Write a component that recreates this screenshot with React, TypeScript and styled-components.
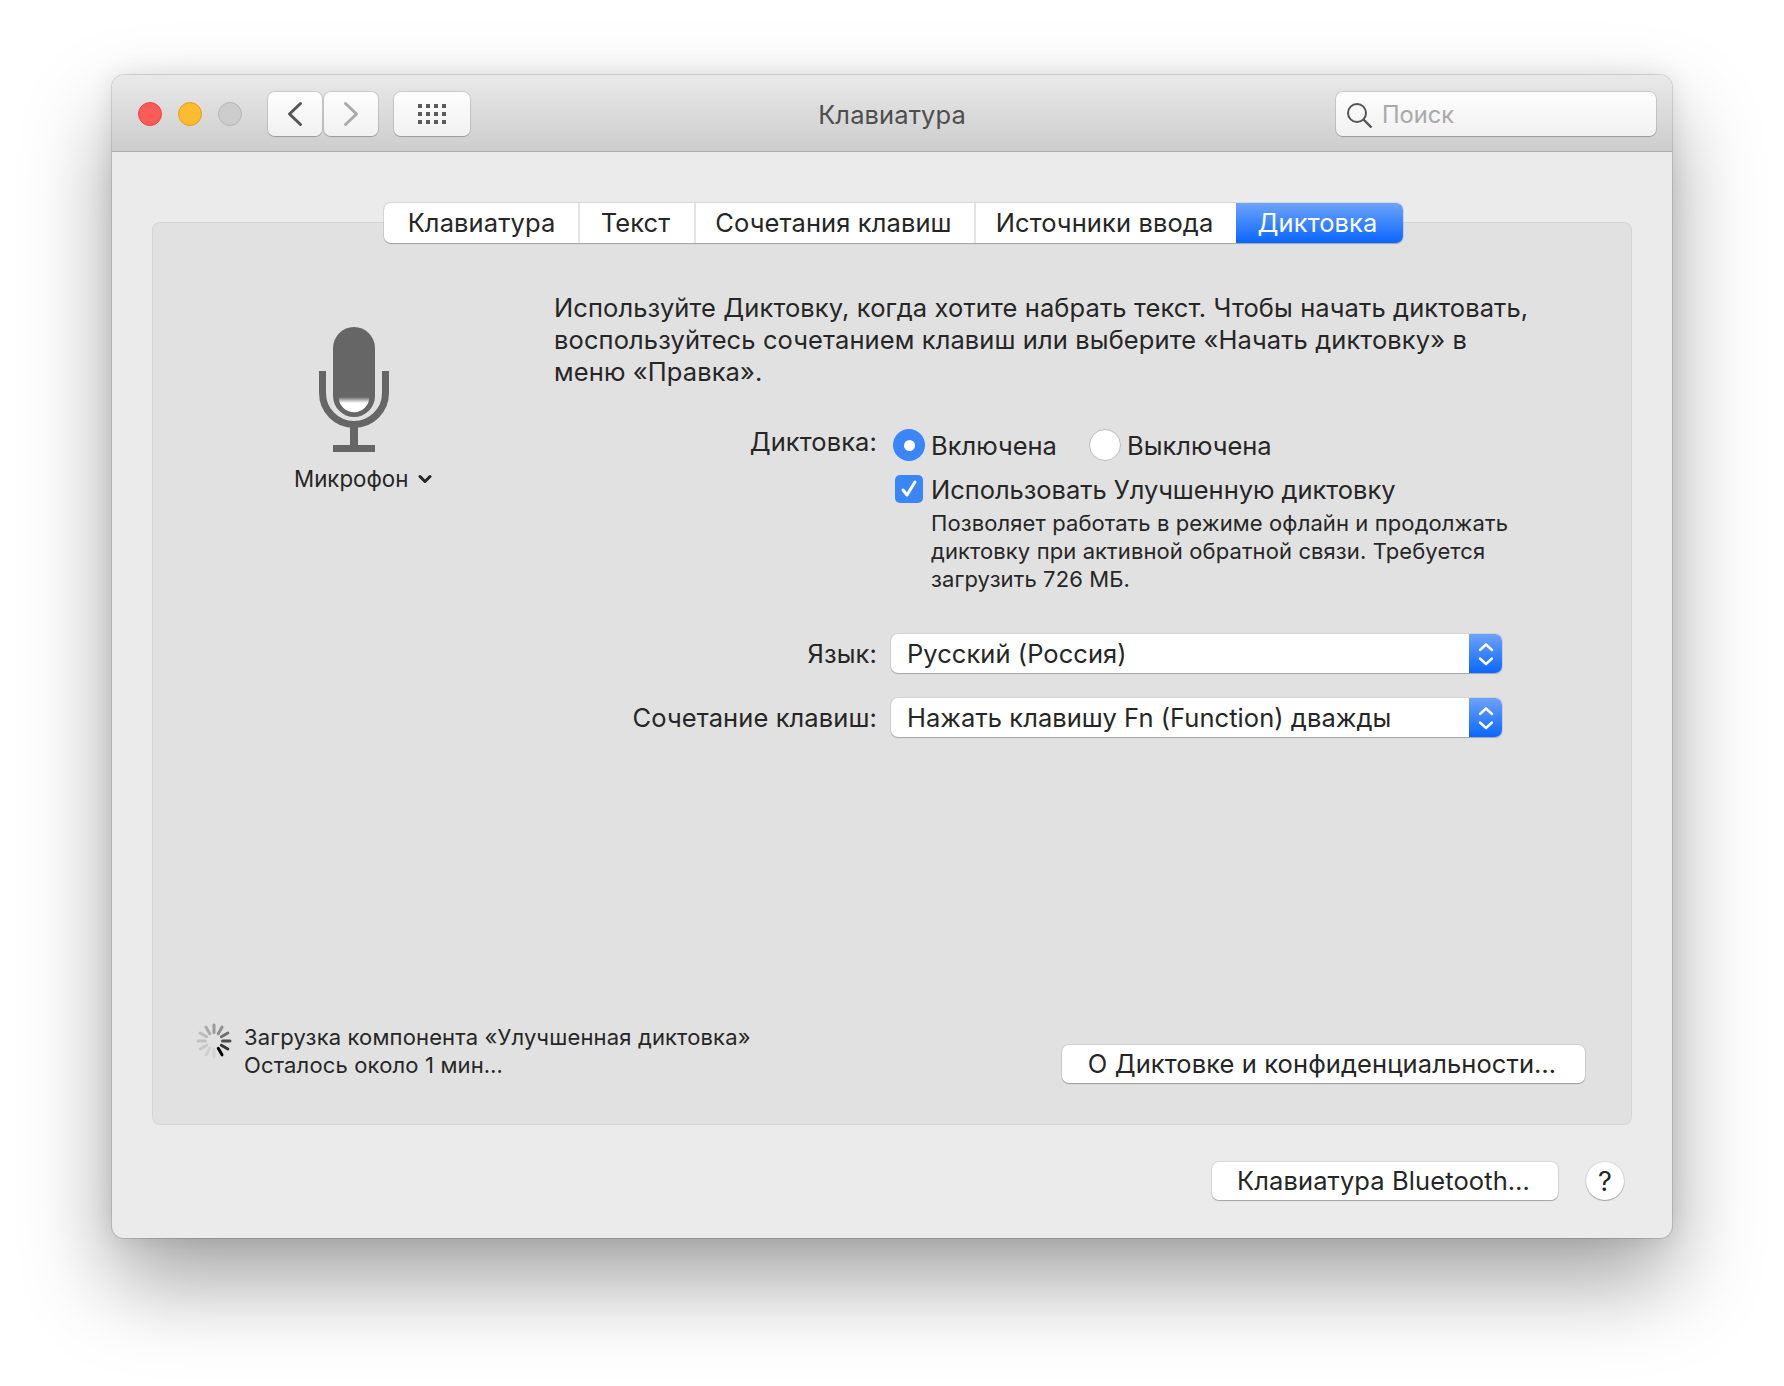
import React from "react";
import styled, { createGlobalStyle } from "styled-components";

const Global = createGlobalStyle`
  html, body { margin: 0; padding: 0; background: #fff; }
  body { font-family: Inter, "Noto Sans", "Liberation Sans", sans-serif; color: #262626; overflow: hidden; }
  #root { height: 1386px; }
`;

const Page = styled.div`
  padding: 75px 0 0 112px;
`;
const Win = styled.div`
  width: 1560px;
  border-radius: 12px;
  background: #ebebeb;
  box-shadow: 0 44px 88px rgba(0, 0, 0, 0.36), 0 0 24px rgba(0, 0, 0, 0.1), 0 0 0 1px rgba(0, 0, 0, 0.12);
`;
const TitleBar = styled.header`
  height: 77px;
  box-sizing: border-box;
  padding: 17px 16px 0 26px;
  display: flex;
  align-items: flex-start;
  position: relative;
  border-radius: 12px 12px 0 0;
  background: linear-gradient(#e9e9e9, #cdcdcd);
  border-bottom: 1px solid #aeaeae;
`;
const Lights = styled.div`
  display: flex;
  gap: 16px;
  padding-top: 10px;
  margin-right: 26px;
`;
const Light = styled.span<{ $c: string; $b: string }>`
  width: 24px;
  height: 24px;
  box-sizing: border-box;
  border-radius: 50%;
  background: ${(p) => p.$c};
  border: 1px solid ${(p) => p.$b};
`;
const ToolBtn = styled.button<{ $w: number; $ml?: number }>`
  width: ${(p) => p.$w}px;
  height: 44px;
  margin-left: ${(p) => p.$ml ?? 0}px;
  padding: 0;
  display: flex;
  align-items: center;
  justify-content: center;
  border: none;
  border-radius: 7px;
  background: linear-gradient(#fdfdfd, #f1f1f1);
  box-shadow: 0 0 0 1px rgba(0, 0, 0, 0.1), 0 1px 1px rgba(0, 0, 0, 0.18);
`;
const Title = styled.div`
  position: absolute;
  left: 0;
  right: 0;
  top: 24px;
  text-align: center;
  font-size: 25.5px;
  letter-spacing: 0.1px;
  line-height: 32px;
  color: #4e4e4e;
  pointer-events: none;
`;
const Search = styled.div`
  margin-left: auto;
  width: 320px;
  height: 44px;
  box-sizing: border-box;
  padding-left: 10px;
  display: flex;
  align-items: center;
  gap: 8px;
  border-radius: 7px;
  background: linear-gradient(#fdfdfd, #f1f1f1);
  box-shadow: 0 0 0 1px rgba(0, 0, 0, 0.1), 0 1px 1px rgba(0, 0, 0, 0.18);
  font-size: 23.7px;
  color: #a9a9a9;
`;
const Body = styled.div`
  padding: 51px 40px 38px;
`;
const Tabs = styled.nav`
  position: relative;
  z-index: 1;
  display: flex;
  width: fit-content;
  margin: 0 auto -21px;
  transform: translateX(1px);
  border-radius: 7px;
  background: #fff;
  box-shadow: 0 0 0 1px rgba(0, 0, 0, 0.08), 0 1px 1px rgba(0, 0, 0, 0.22);
`;
const Tab = styled.div<{ $w: number; $active?: boolean; $first?: boolean }>`
  width: ${(p) => p.$w}px;
  height: 40px;
  box-sizing: border-box;
  display: flex;
  align-items: center;
  justify-content: center;
  padding: 0 ${(p) => (p.$first ? 0 : p.$active ? 3 : 2)}px 2px ${(p) => (p.$first ? 2 : 0)}px;
  font-size: 25.5px;
  letter-spacing: 0.1px;
  white-space: nowrap;
  color: ${(p) => (p.$active ? "#fff" : "#262626")};
  background: ${(p) => (p.$active ? "linear-gradient(#6da3fb, #0a66ff)" : "transparent")};
  border-radius: ${(p) => (p.$active ? "0 7px 7px 0" : "0")};
  border-left: ${(p) => (p.$first || p.$active ? "none" : "2px solid #e4e4e4")};
`;
const Panel = styled.section`
  height: 903px;
  box-sizing: border-box;
  display: flex;
  flex-direction: column;
  justify-content: space-between;
  padding: 0 47px 42px 0;
  border-radius: 8px;
  background: #e1e1e1;
  box-shadow: inset 0 0 0 1px rgba(0, 0, 0, 0.05);
`;
const Top = styled.div`
  display: grid;
  grid-template-columns: 402px 1fr;
`;
const MicCol = styled.div`
  padding: 105px 0 0 142px;
  display: flex;
  flex-direction: column;
  align-items: flex-start;
`;
const MicArt = styled.svg`
  display: block;
  margin-left: 25px;
`;
const MicLabel = styled.div`
  margin-top: 13px;
  display: flex;
  align-items: center;
  gap: 10px;
  font-size: 22.3px;
  line-height: 28px;
  white-space: nowrap;
`;
const Right = styled.div`
  padding-top: 70px;
`;
const Desc = styled.p`
  margin: 0;
  font-size: 25.5px;
  letter-spacing: 0.1px;
  line-height: 32px;
  white-space: nowrap;
`;
const Form = styled.div`
  margin-top: 41px;
  display: grid;
  grid-template-columns: 323px 611px;
  column-gap: 14px;
`;
const Label = styled.div<{ $shift?: number }>`
  text-align: right;
  font-size: 25.5px;
  letter-spacing: 0.1px;
  line-height: 32px;
  white-space: nowrap;
  transform: translateY(${(p) => p.$shift ?? 0}px);
`;
const Radios = styled.div`
  display: grid;
  grid-template-columns: 196px auto;
  padding-left: 2px;
`;
const RadioOpt = styled.div`
  display: flex;
  align-items: center;
  gap: 6px;
  font-size: 25.5px;
  line-height: 32px;
  white-space: nowrap;
`;
const RowText = styled.span<{ $dy: number }>`
  transform: translateY(${(p) => p.$dy}px);
`;
const Radio = styled.span<{ $on?: boolean }>`
  width: 32px;
  height: 32px;
  box-sizing: border-box;
  flex: none;
  border-radius: 50%;
  display: flex;
  align-items: center;
  justify-content: center;
  background: ${(p) => (p.$on ? "#3b86f7" : "#fff")};
  border: ${(p) => (p.$on ? "none" : "1px solid #bdbdbd")};
  &::after {
    content: "";
    display: ${(p) => (p.$on ? "block" : "none")};
    width: 11px;
    height: 11px;
    border-radius: 50%;
    background: #fff;
  }
`;
const Side = styled.div`
  grid-column: 2;
`;
const CheckRow = styled.div`
  margin: 14px 0 0 4px;
  display: flex;
  align-items: center;
  gap: 8px;
  font-size: 25.5px;
  letter-spacing: -0.04px;
  line-height: 28px;
  white-space: nowrap;
`;
const Check = styled.span`
  width: 28px;
  height: 28px;
  flex: none;
  border-radius: 5px;
  background: #3b86f7;
  display: flex;
  align-items: center;
  justify-content: center;
`;
const Hint = styled.p`
  margin: 6px 0 0 40px;
  font-size: 22px;
  letter-spacing: 0.1px;
  line-height: 28px;
  white-space: nowrap;
`;
const SelectLabel = styled(Label)<{ $mt: number }>`
  margin-top: ${(p) => p.$mt}px;
  line-height: 39px;
`;
const Select = styled.div<{ $mt: number }>`
  margin-top: ${(p) => p.$mt}px;
  height: 39px;
  display: flex;
  align-items: center;
  justify-content: space-between;
  border-radius: 7px;
  background: #fff;
  box-shadow: 0 0 0 1px rgba(0, 0, 0, 0.06), 0 1px 1px rgba(0, 0, 0, 0.22);
  font-size: 25.5px;
  letter-spacing: 0.05px;
  white-space: nowrap;
`;
const SelectText = styled.span`
  padding-left: 16px;
`;
const Stepper = styled.span`
  width: 33px;
  height: 100%;
  display: flex;
  align-items: center;
  justify-content: center;
  border-radius: 0 7px 7px 0;
  background: linear-gradient(#6da3fb, #0a66ff);
`;
const Bottom = styled.div`
  display: flex;
  justify-content: space-between;
  align-items: flex-end;
`;
const Status = styled.div`
  margin: 0 0 4px 44px;
  display: flex;
  gap: 12px;
  font-size: 22px;
  letter-spacing: 0.15px;
  line-height: 28px;
  white-space: nowrap;
`;
const Spin = styled.svg`
  display: block;
  flex: none;
`;
const PushBtn = styled.button<{ $w: number }>`
  width: ${(p) => p.$w}px;
  height: 38px;
  padding: 0 3px 2px 0;
  border: none;
  border-radius: 7px;
  background: #fff;
  box-shadow: 0 0 0 1px rgba(0, 0, 0, 0.07), 0 1px 1px rgba(0, 0, 0, 0.25);
  font: inherit;
  font-size: 25.5px;
  letter-spacing: 0.1px;
  color: #262626;
  white-space: nowrap;
`;
const Footer = styled.div`
  display: flex;
  justify-content: flex-end;
  align-items: center;
  gap: 28px;
  padding: 37px 8px 0 0;
`;
const Help = styled.button`
  width: 38px;
  height: 38px;
  padding: 0;
  border: none;
  border-radius: 50%;
  background: #fff;
  box-shadow: 0 0 0 1px rgba(0, 0, 0, 0.07), 0 1px 1px rgba(0, 0, 0, 0.25);
  font: inherit;
  font-size: 27px;
  color: #262626;
`;

const Chevron = ({ dir, color }: { dir: "l" | "r"; color: string }) => (
  <svg width="16" height="26" viewBox="0 0 16 26" fill="none">
    <path
      d={dir === "l" ? "M13.5 2.5 2.5 13l11 10.5" : "M2.5 2.5 13.5 13l-11 10.5"}
      stroke={color}
      strokeWidth="3"
      strokeLinecap="round"
      strokeLinejoin="round"
    />
  </svg>
);

const GridIcon = () => (
  <svg width="28" height="20" viewBox="0 0 28 20" fill="#5c5c5c">
    {[0, 8, 16].flatMap((y) =>
      [0, 8, 16, 24].map((x) => <rect key={`${x}-${y}`} x={x} y={y} width="4" height="4" />)
    )}
  </svg>
);

const SearchIcon = () => (
  <svg width="28" height="28" viewBox="0 -2 28 28" fill="none" stroke="#555" strokeWidth="2">
    <circle cx="11" cy="11" r="9" />
    <path d="m17.5 17.5 8 8" strokeWidth="2.4" />
  </svg>
);

const Mic = () => (
  <MicArt width="70" height="125" viewBox="0 0 70 125">
    <defs>
      <linearGradient id="micGlow" x1="0" y1="70" x2="0" y2="76" gradientUnits="userSpaceOnUse">
        <stop offset="0" stopColor="#666" />
        <stop offset="1" stopColor="#fff" />
      </linearGradient>
    </defs>
    <rect x="14" y="0" width="42" height="90" rx="21" fill="#666" />
    <path d="M19.7 70h30.6a15.3 15.3 0 0 1-30.6 0Z" fill="url(#micGlow)" />
    <path d="M3.5 44v22a31.5 31.5 0 0 0 63 0V44" fill="none" stroke="#666" strokeWidth="7" />
    <rect x="31" y="100" width="8" height="19" fill="#666" />
    <rect x="14" y="118" width="42" height="7" fill="#666" />
  </MicArt>
);

const StepIcon = () => (
  <svg width="20" height="28" viewBox="0 0 20 28" fill="none" stroke="#fff" strokeWidth="2.4" strokeLinecap="round" strokeLinejoin="round">
    <path d="M4 10l6-5.5L16 10M4 18.5l6 5.5 6-5.5" />
  </svg>
);

const spinShades = ["#9a9a9a", "#8e8e8e", "#707070", "#4c4c4c", "#333", "#000", "#d4d4d4", "#cfcfcf", "#c8c8c8", "#c2c2c2", "#bbb", "#aaa"];
const Spinner = () => (
  <Spin width="36" height="36" viewBox="-18 -18 36 36">
    {spinShades.map((c, i) => (
      <line
        key={i}
        x1="0"
        y1="-8.5"
        x2="0"
        y2="-16"
        stroke={c}
        strokeWidth="3"
        strokeLinecap="round"
        transform={`rotate(${i * 30})`}
      />
    ))}
  </Spin>
);

export default function App() {
  return (
    <Page>
      <Global />
      <Win>
        <TitleBar>
          <Lights>
            <Light $c="#fc5b57" $b="#e2463f" />
            <Light $c="#fdbc2f" $b="#e09e1e" />
            <Light $c="#cdcdcd" $b="#b5b5b5" />
          </Lights>
          <ToolBtn $w={54}><Chevron dir="l" color="#555" /></ToolBtn>
          <ToolBtn $w={54} $ml={2}><Chevron dir="r" color="#aaa" /></ToolBtn>
          <ToolBtn $w={76} $ml={16}><GridIcon /></ToolBtn>
          <Title>Клавиатура</Title>
          <Search>
            <SearchIcon />
            <span>Поиск</span>
          </Search>
        </TitleBar>
        <Body>
          <Tabs>
            {([
              ["Клавиатура", 194],
              ["Текст", 116],
              ["Сочетания клавиш", 280],
              ["Источники ввода", 262],
            ] as [string, number][]).map(([t, w], i) => (
              <Tab key={t} $w={w} $first={i === 0}>{t}</Tab>
            ))}
            <Tab $w={167} $active>Диктовка</Tab>
          </Tabs>
          <Panel>
            <Top>
              <MicCol>
                <Mic />
                <MicLabel>
                  Микрофон
                  <svg width="14" height="10" viewBox="0 0 14 10" fill="none" stroke="#262626" strokeWidth="3" strokeLinecap="round" strokeLinejoin="round">
                    <path d="M2 2.5l5 5 5-5" />
                  </svg>
                </MicLabel>
              </MicCol>
              <Right>
                <Desc>
                  Используйте Диктовку, когда хотите набрать текст. Чтобы начать диктовать,
                  <br />
                  воспользуйтесь сочетанием клавиш или выберите «Начать диктовку» в
                  <br />
                  меню «Правка».
                </Desc>
                <Form>
                  <Label $shift={-3}>Диктовка:</Label>
                  <Radios>
                    <RadioOpt><Radio $on /><RowText $dy={1}>Включена</RowText></RadioOpt>
                    <RadioOpt><Radio /><RowText $dy={1}>Выключена</RowText></RadioOpt>
                  </Radios>
                  <Side>
                    <CheckRow>
                      <Check>
                        <svg width="20" height="20" viewBox="0 0 20 20" fill="none" stroke="#fff" strokeWidth="3" strokeLinecap="round" strokeLinejoin="round">
                          <path d="M4 11l4 5 8-13" />
                        </svg>
                      </Check>
                      <RowText $dy={1}>Использовать Улучшенную диктовку</RowText>
                    </CheckRow>
                    <Hint>
                      Позволяет работать в режиме офлайн и продолжать
                      <br />
                      диктовку при активной обратной связи. Требуется
                      <br />
                      загрузить 726 МБ.
                    </Hint>
                  </Side>
                  <SelectLabel $mt={41} $shift={0}>Язык:</SelectLabel>
                  <Select $mt={41}>
                    <SelectText>Русский (Россия)</SelectText>
                    <Stepper><StepIcon /></Stepper>
                  </Select>
                  <SelectLabel $mt={25} $shift={0}>Сочетание клавиш:</SelectLabel>
                  <Select $mt={25}>
                    <SelectText>Нажать клавишу Fn (Function) дважды</SelectText>
                    <Stepper><StepIcon /></Stepper>
                  </Select>
                </Form>
              </Right>
            </Top>
            <Bottom>
              <Status>
                <Spinner />
                <div>
                  Загрузка компонента «Улучшенная диктовка»
                  <br />
                  Осталось около 1 мин…
                </div>
              </Status>
              <PushBtn $w={523}>О Диктовке и конфиденциальности…</PushBtn>
            </Bottom>
          </Panel>
          <Footer>
            <PushBtn $w={346}>Клавиатура Bluetooth…</PushBtn>
            <Help>?</Help>
          </Footer>
        </Body>
      </Win>
    </Page>
  );
}
